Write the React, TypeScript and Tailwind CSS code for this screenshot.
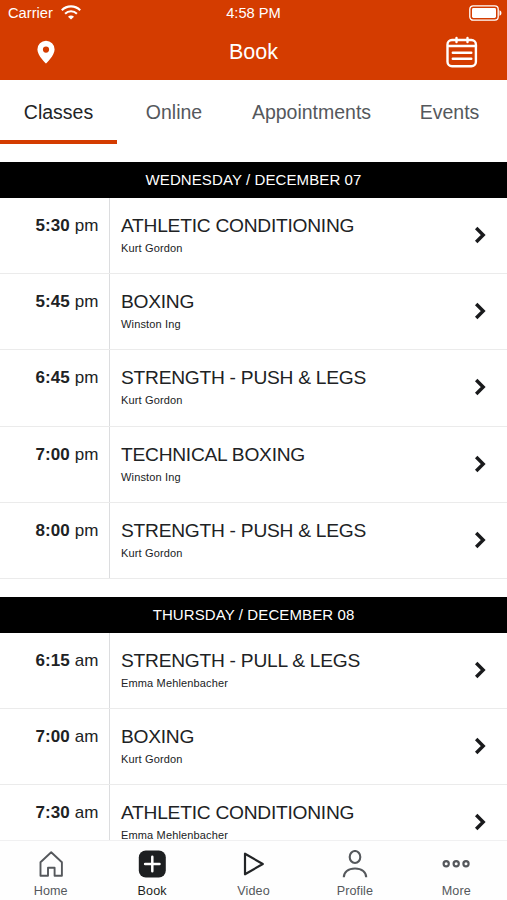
import clsx from 'clsx';

const tabs = [
  { label: 'Classes', width: 'w-[117px]' },
  { label: 'Online', width: 'w-[114px]' },
  { label: 'Appointments', width: 'w-[161px]' },
  { label: 'Events', width: 'w-[115px]' },
];

const days = [
  {
    date: 'WEDNESDAY / DECEMBER 07',
    classes: [
      { time: '5:30', period: 'pm', name: 'ATHLETIC CONDITIONING', coach: 'Kurt Gordon' },
      { time: '5:45', period: 'pm', name: 'BOXING', coach: 'Winston Ing' },
      { time: '6:45', period: 'pm', name: 'STRENGTH - PUSH & LEGS', coach: 'Kurt Gordon' },
      { time: '7:00', period: 'pm', name: 'TECHNICAL BOXING', coach: 'Winston Ing' },
      { time: '8:00', period: 'pm', name: 'STRENGTH - PUSH & LEGS', coach: 'Kurt Gordon' },
    ],
  },
  {
    date: 'THURSDAY / DECEMBER 08',
    classes: [
      { time: '6:15', period: 'am', name: 'STRENGTH - PULL & LEGS', coach: 'Emma Mehlenbacher' },
      { time: '7:00', period: 'am', name: 'BOXING', coach: 'Kurt Gordon' },
      { time: '7:30', period: 'am', name: 'ATHLETIC CONDITIONING', coach: 'Emma Mehlenbacher' },
    ],
  },
];

function StatusBar() {
  return (
    <div className="grid h-6 grid-cols-3 items-center pl-[8px] pr-[5px] text-[14.7px] leading-6">
      <div className="flex items-center gap-[8px]">
        <span className="pt-px">Carrier</span>
        <svg width="20" height="15" viewBox="0 0 20 15" fill="none" stroke="currentColor" strokeWidth="2.1">
          <path d="M.8 5.2a13 13 0 0 1 18.4 0" />
          <path d="M4.1 8.7a8.4 8.4 0 0 1 11.8 0" />
          <path d="M10 14.6 7 11.7a4.2 4.2 0 0 1 6 0z" fill="currentColor" stroke="none" />
        </svg>
      </div>
      <span className="pr-[3px] text-center">4:58 PM</span>
      <svg className="justify-self-end" width="33" height="16" viewBox="0 0 33 16" fill="none">
        <rect x=".8" y=".8" width="28.4" height="14.4" rx="3.4" stroke="currentColor" strokeWidth="1.3" />
        <rect x="3" y="3" width="24" height="10" rx="1.4" fill="currentColor" />
        <path d="M30.5 5.2c2.6.8 2.6 4.8 0 5.6z" fill="currentColor" />
      </svg>
    </div>
  );
}

function Header() {
  return (
    <header className="h-20 shrink-0 bg-[#d43c00] text-white">
      <StatusBar />
      <div className="grid h-14 grid-cols-3 items-center pl-[37px] pr-[29px]">
        <svg width="18" height="24" viewBox="0 0 18 24" fill="currentColor">
          <path
            fillRule="evenodd"
            d="M9 .8a8.6 8.6 0 0 0-8.6 8.6C.4 15.5 9 23.5 9 23.5s8.6-8 8.6-14.1A8.6 8.6 0 0 0 9 .8zm0 5.7a3.100 3.100 0 1 1 0 6.200 3.100 3.100 0 0 1 0-6.200z"
          />
        </svg>
        <h1 className="pr-[8px] text-center text-[21.5px] leading-[56px]">Book</h1>
        <svg
          className="justify-self-end"
          width="32"
          height="32"
          viewBox="0 0 32 32"
          fill="none"
          stroke="currentColor"
          strokeWidth="2.4"
          strokeLinecap="round"
        >
          <rect x="1.500" y="4" width="28.400" height="26.200" rx="4.500" />
          <path d="M10.500 2v4M21.500 2v4M2 10h28M6.800 16.700h18.500M6.800 22.700h18.500" />
        </svg>
      </div>
    </header>
  );
}

function Tabs() {
  return (
    <nav className="flex h-16 shrink-0 text-[19.500px]">
      {tabs.map((tab, i) => (
        <button
          key={tab.label}
          className={clsx(
            'border-b-4 pt-[5px]',
            tab.width,
            i === 0 ? 'border-[#d43c00] text-[#222426]' : 'border-transparent text-[#55585c]'
          )}
        >
          {tab.label}
        </button>
      ))}
    </nav>
  );
}

function ClassRow({ time, period, name, coach }: (typeof days)[0]['classes'][0]) {
  return (
    <li className="flex h-[76.200px] shrink-0 border-b border-[#ebebeb] text-[#202224]">
      <div className="w-[110px] shrink-0 border-r border-[#dcdddf] pr-[10.500px] pt-[18px] text-right text-[17px] leading-5 tracking-[0.100px]">
        <strong>{time}</strong> {period}
      </div>
      <div className="flex-1 pl-[11px] pt-[16px]">
        <div className="text-[19.200px] leading-6 tracking-[-0.250px]">{name}</div>
        <div className="pt-[2px] text-[11px] leading-4 tracking-[0.150px]">{coach}</div>
      </div>
      <svg className="mr-[20px] mt-[28px]" width="14" height="18" viewBox="0 0 14 18" fill="none" stroke="#191a1c" strokeWidth="3.400">
        <path d="m3.200 2 7 7-7 7" />
      </svg>
    </li>
  );
}

function Schedule() {
  return (
    <main className="flex min-h-0 flex-1 flex-col gap-[18px] overflow-hidden pt-[18px]">
      {days.map((day) => (
        <section key={day.date} className="shrink-0">
          <h2 className="h-9 bg-black text-center text-[15px] leading-9 tracking-[0.100px] text-white">{day.date}</h2>
          <ul>
            {day.classes.map((item) => (
              <ClassRow key={item.time} {...item} />
            ))}
          </ul>
        </section>
      ))}
    </main>
  );
}

function HomeIcon() {
  return (
    <svg width="28" height="28" viewBox="0 0 28 28" fill="none" stroke="currentColor" strokeWidth="1.900" strokeLinejoin="round">
      <path d="M3.500 12.300 14.200 2.300l10.700 10v13.400h-7.300v-7.900h-6.600v7.900H3.500z" />
    </svg>
  );
}

function BookIcon() {
  return (
    <svg width="28" height="28" viewBox="0 0 28 28">
      <rect x=".8" y=".5" width="27" height="27" rx="7" fill="#1d1f21" />
      <path d="M14.300 6.800v14.400M7.100 14h14.400" stroke="#fff" strokeWidth="2.500" strokeLinecap="round" />
    </svg>
  );
}

function VideoIcon() {
  return (
    <svg width="28" height="28" viewBox="0 0 28 28" fill="none" stroke="#222426" strokeWidth="2.200" strokeLinejoin="round">
      <path d="M6 3.700v20.600L23.800 14z" />
    </svg>
  );
}

function ProfileIcon() {
  return (
    <svg width="28" height="28" viewBox="0 0 28 28" fill="none" stroke="currentColor" strokeWidth="2.100">
      <ellipse cx="14" cy="7" rx="5.300" ry="6" />
      <path d="M2.800 27.300c0-5 4.200-8.800 11.200-8.800s11.200 3.800 11.200 8.800" />
    </svg>
  );
}

function MoreIcon() {
  return (
    <svg width="28" height="28" viewBox="0 0 28 28" fill="none" stroke="currentColor" strokeWidth="2.200">
      <circle cx="4.200" cy="13.700" r="2.600" />
      <circle cx="14.200" cy="13.700" r="2.600" />
      <circle cx="24" cy="13.700" r="2.600" />
    </svg>
  );
}

const navItems = [
  { label: 'Home', icon: HomeIcon },
  { label: 'Book', icon: BookIcon },
  { label: 'Video', icon: VideoIcon },
  { label: 'Profile', icon: ProfileIcon },
  { label: 'More', icon: MoreIcon },
];

function BottomNav() {
  return (
    <nav className="grid h-[60px] shrink-0 grid-cols-5 border-t border-[#f0f0f1] bg-[#fefefe]">
      {navItems.map(({ label, icon: Icon }) => (
        <button
          key={label}
          className={clsx(
            'flex flex-col items-center pt-[9px] text-[12.600px] leading-4 tracking-[0.100px]',
            label === 'Book' ? 'text-[#1d1f21]' : 'text-[#55585c]'
          )}
        >
          <Icon />
          <span className="mt-[5px]">{label}</span>
        </button>
      ))}
    </nav>
  );
}

export default function App() {
  return (
    <div className="flex h-[900px] w-[507px] flex-col overflow-hidden bg-white font-['Liberation_Sans',Arial,sans-serif]">
      <Header />
      <Tabs />
      <Schedule />
      <BottomNav />
    </div>
  );
}
